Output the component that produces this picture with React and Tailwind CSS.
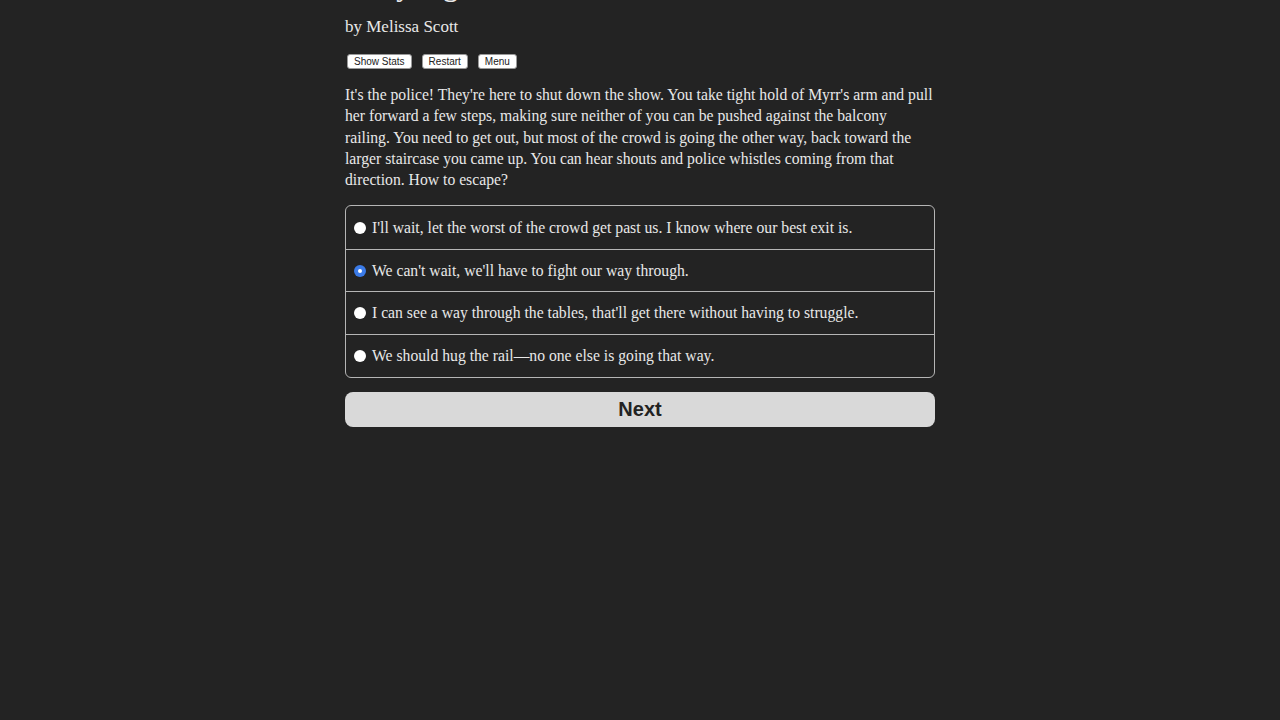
import { useState } from 'react';

const choices = [
  "I'll wait, let the worst of the crowd get past us. I know where our best exit is.",
  "We can't wait, we'll have to fight our way through.",
  "I can see a way through the tables, that'll get there without having to struggle.",
  'We should hug the rail\u2014no one else is going that way.',
];

const lines = [
  "It's the police! They're here to shut down the show. You take tight hold of Myrr's arm and pull",
  'her forward a few steps, making sure neither of you can be pushed against the balcony',
  'railing. You need to get out, but most of the crowd is going the other way, back toward the',
  'larger staircase you came up. You can hear shouts and police whistles coming from that',
  'direction. How to escape?',
];

function Radio({ checked }) {
  if (checked) {
    return (
      <span className="w-[12px] h-[12px] rounded-full bg-[#3b7be8] flex items-center justify-center shrink-0">
        <span className="w-[4px] h-[4px] rounded-full bg-white"></span>
      </span>
    );
  }
  return <span className="w-[12px] h-[12px] rounded-full bg-white shrink-0"></span>;
}

export default function App() {
  const [selected, setSelected] = useState(1);

  return (
    <div className="min-h-[720px] bg-[#232323] overflow-hidden" style={{ fontFamily: '"Liberation Serif", serif' }}>
      <div className="mx-auto w-[590px]">
        {/* title scrolled off the top */}
        <h1 className="-mt-[29px] text-[28px] leading-[32px] text-[#e8e8e8] font-bold">Fairy Lights</h1>
        <p className="mt-[13px] text-[17px] leading-[22px] text-[#e8e8e8]">by Melissa Scott</p>

        <div className="mt-[16px] flex gap-[10px] pl-[2px]" style={{ fontFamily: '"Liberation Sans", Arial, sans-serif' }}>
          <button className="h-[15px] px-[6px] bg-white text-[10px] leading-[13px] text-[#222] rounded-[3px] border border-[#999]">Show Stats</button>
          <button className="h-[15px] px-[6px] bg-white text-[10px] leading-[13px] text-[#222] rounded-[3px] border border-[#999]">Restart</button>
          <button className="h-[15px] px-[6px] bg-white text-[10px] leading-[13px] text-[#222] rounded-[3px] border border-[#999]">Menu</button>
        </div>

        <p className="mt-[15px] text-[15.7px] leading-[21.25px] text-[#e8e8e8]">
          {lines.map((l, i) => (
            <span key={i} className="block whitespace-nowrap">{l}</span>
          ))}
        </p>

        <div className="mt-[15px] border border-[#b5b5b5] rounded-[6px] overflow-hidden">
          {choices.map((c, i) => (
            <label
              key={i}
              onClick={() => setSelected(i)}
              className={`h-[42.6px] flex items-center gap-[6px] pl-[8px] text-[15.7px] text-[#e8e8e8] cursor-pointer ${i > 0 ? 'border-t border-[#b5b5b5]' : ''}`}
            >
              <Radio checked={selected === i} />
              <span>{c}</span>
            </label>
          ))}
        </div>

        <button
          className="mt-[14px] w-full h-[35px] rounded-[8px] bg-[#d9d9d9] text-[20px] font-bold text-[#222]"
          style={{ fontFamily: '"Liberation Sans", Arial, sans-serif' }}
        >
          Next
        </button>
      </div>
    </div>
  );
}
